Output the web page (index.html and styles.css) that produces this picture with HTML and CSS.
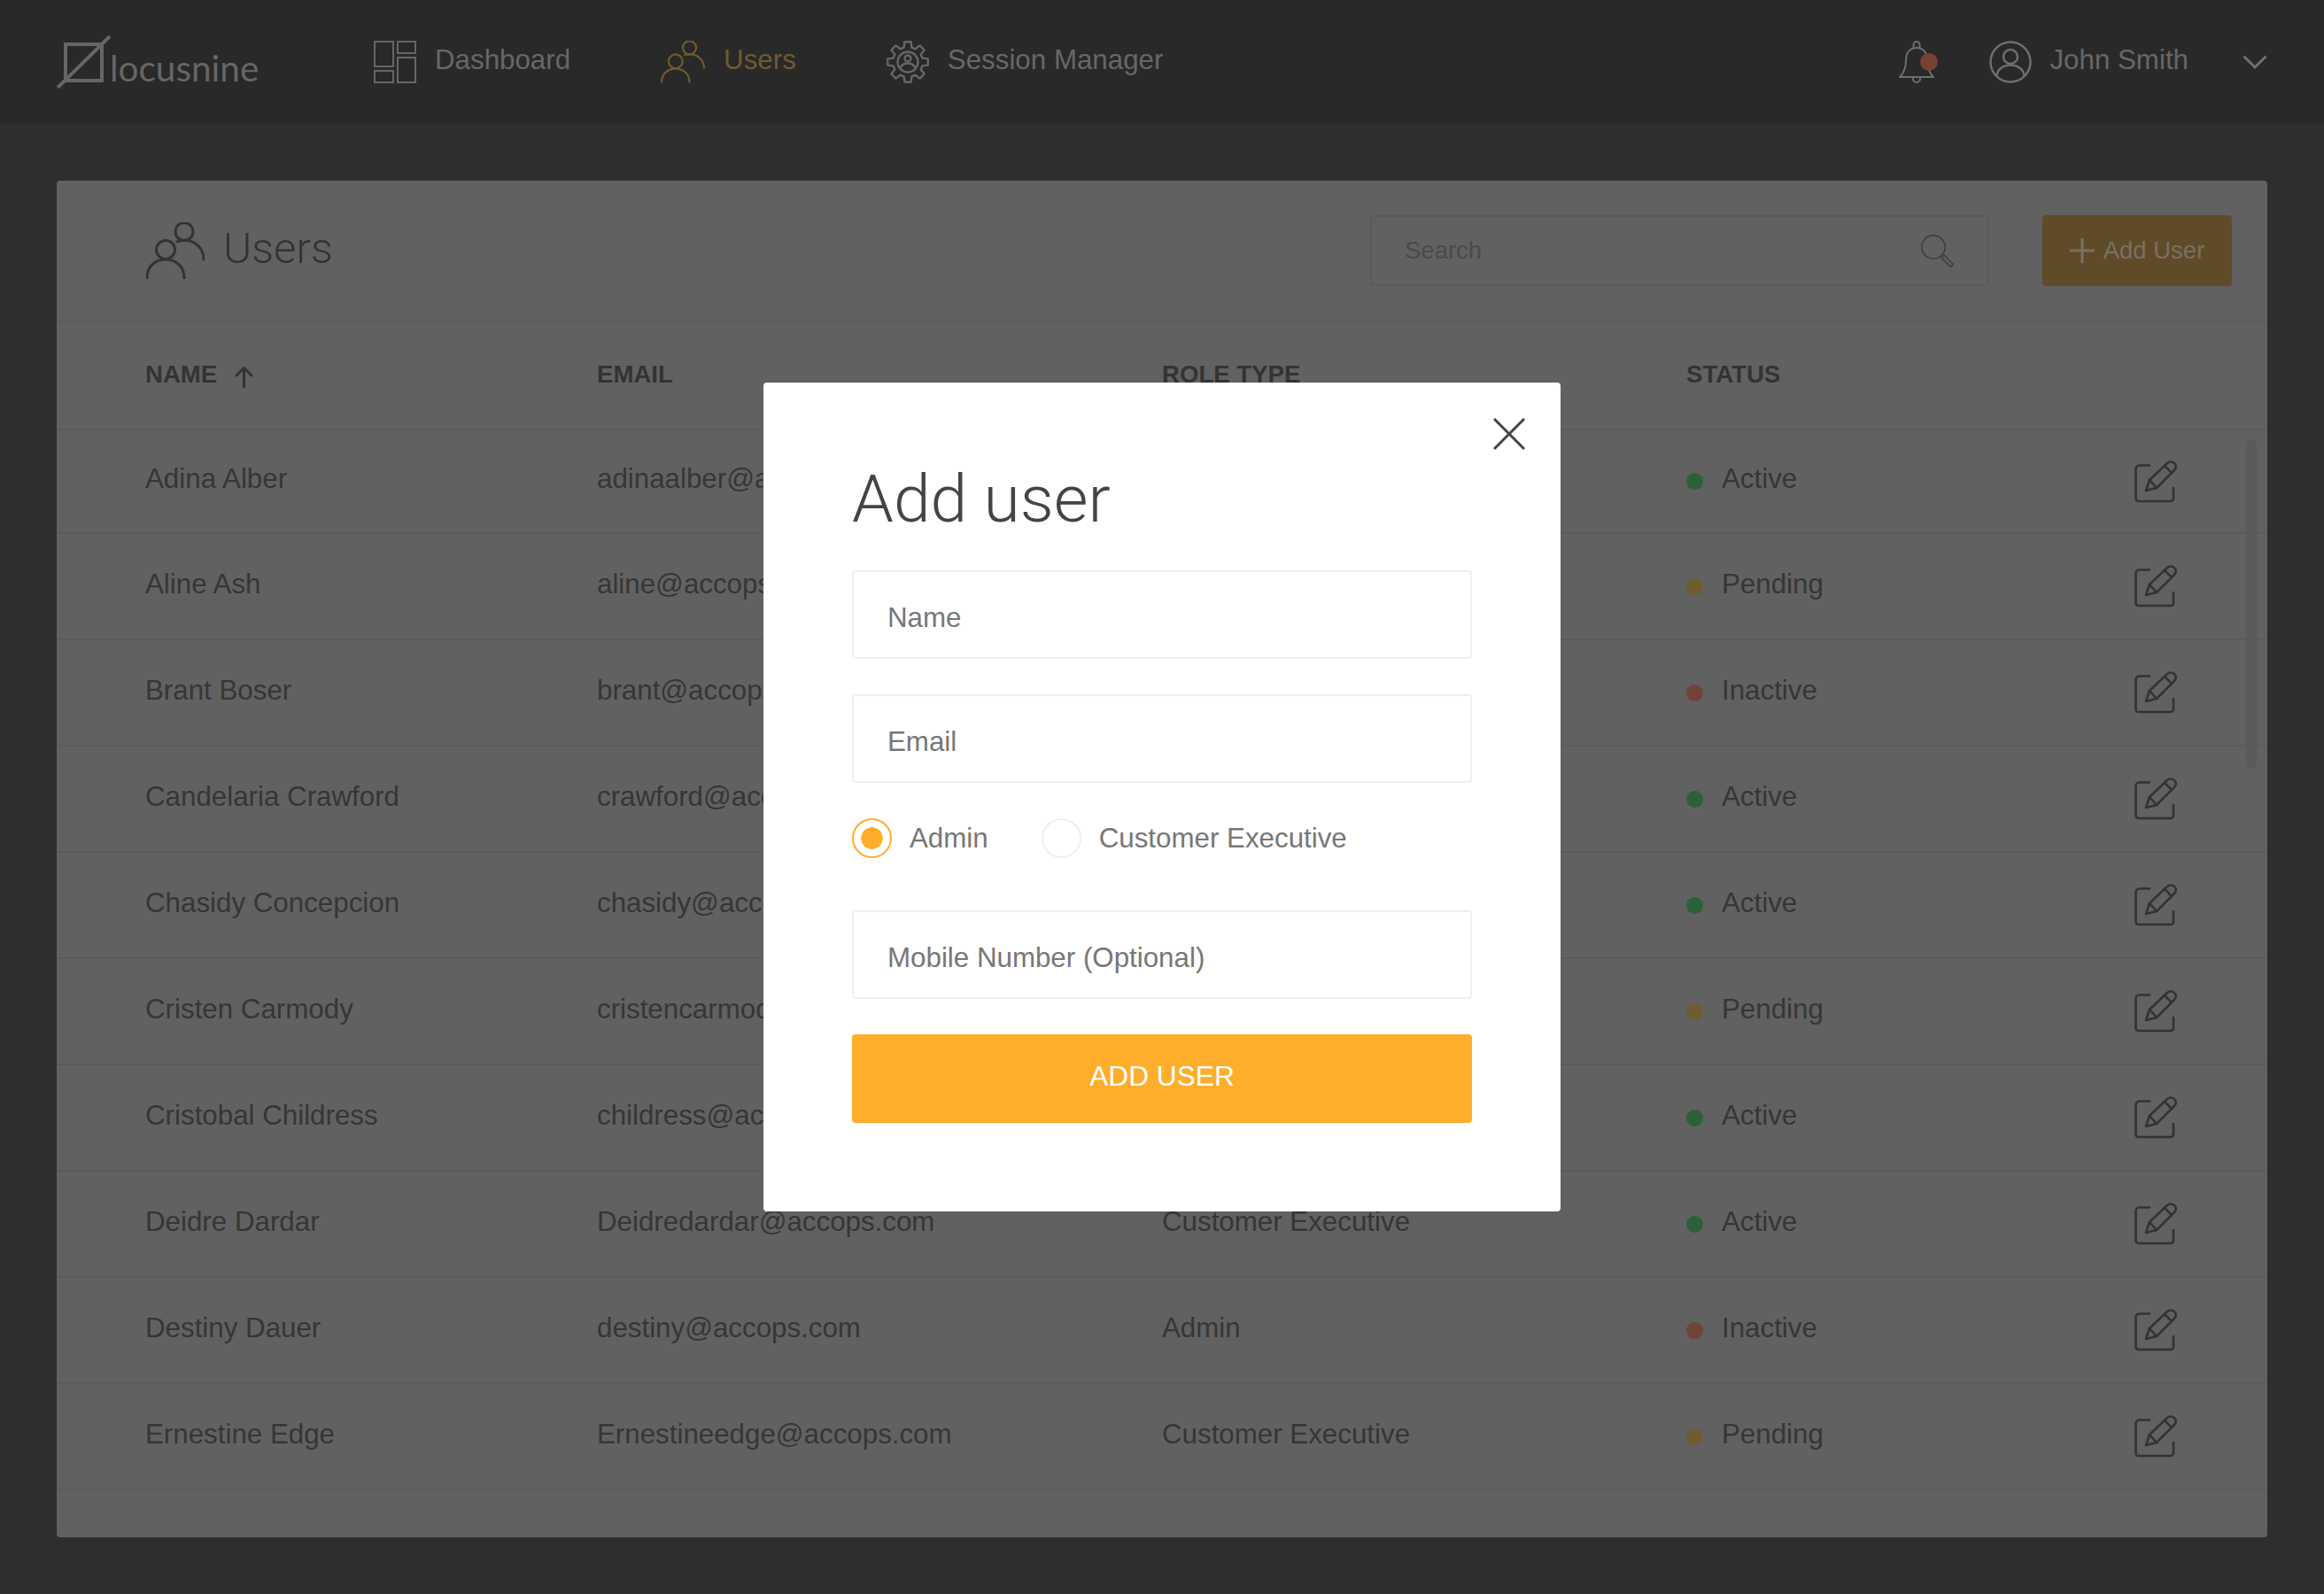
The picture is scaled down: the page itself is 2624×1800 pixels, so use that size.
FILE: index.html
```html
<!DOCTYPE html>
<html lang="en">
<head>
    <meta charset="UTF-8">
    <title>locusnine - Users</title>
    <link rel="stylesheet" href="styles.css">
</head>
<body>
    <svg class="defs" width="0" height="0">
        <symbol id="people" viewBox="0 0 66 64">
            <circle cx="22" cy="31" r="10.5"/>
            <path d="M1 63C1 50 10 42 22 42C34 42 43 50 43 63"/>
            <circle cx="43" cy="10.5" r="10"/>
            <path d="M35 22C38 20.8 41 20.5 44 20.5C56 20.5 65 30 65 42"/>
        </symbol>
        <symbol id="edit" viewBox="0 0 48 48">
            <path d="M17 5.5H5.500A4 4 0 0 0 1.500 9.500V43A3 3 0 0 0 4.500 46H41A3 3 0 0 0 44 43V31"/>
            <path d="M13 34L17 22L37 3Q41 0 45 3Q48.500 7 45 11L25 31Z"/>
            <path d="M17 22L25 31M34 6L42 14"/>
        </symbol>
    </svg>

    <nav class="topbar">
        <a class="logo">
            <svg width="62" height="60" viewBox="0 0 62 60">
                <rect x="10" y="10" width="41" height="41"/>
                <path d="M60 1L1 59"/>
            </svg>
            <span>locusnine</span>
        </a>
        <div class="nav-links">
            <a class="nav-item">
                <svg class="ico-dash" width="48" height="48" viewBox="0 0 48 48">
                    <rect x="1" y="1" width="21" height="28"/>
                    <rect x="27" y="1" width="20" height="13"/>
                    <rect x="27" y="19" width="20" height="28"/>
                    <rect x="1" y="34" width="21" height="13"/>
                </svg>
                <span>Dashboard</span>
            </a>
            <a class="nav-item active">
                <svg class="ico-people" width="50" height="48"><use href="#people"/></svg>
                <span>Users</span>
            </a>
            <a class="nav-item">
                <svg class="ico-gear" width="48" height="48" viewBox="0 0 48 48">
                    <path d="M19.600 7.580L20.400 1.280H27.600L28.400 7.580L32.500 9.280L37.520 5.390L42.610 10.480L38.720 15.500L40.420 19.600L46.720 20.400V27.600L40.420 28.400L38.720 32.500L42.610 37.520L37.520 42.610L32.500 38.720L28.400 40.420L27.600 46.720H20.400L19.600 40.420L15.500 38.720L10.480 42.610L5.390 37.520L9.280 32.500L7.580 28.400L1.280 27.600V20.400L7.580 19.600L9.280 15.500L5.390 10.480L10.480 5.390L15.500 9.280Z"/>
                    <circle cx="24" cy="24" r="11.500"/>
                    <circle cx="24" cy="20" r="3.500"/>
                    <path d="M15.500 31C17 27 20 25.500 24 25.500C28 25.500 31 27 32.500 31"/>
                </svg>
                <span>Session Manager</span>
            </a>
        </div>
        <div class="nav-right">
            <svg class="ico-bell" width="44" height="48" viewBox="0 0 44 48">
                <path d="M20 8C12 8 8 14 8 22C8 30 6 36 1 41H39C34 36 32 30 32 22C32 14 28 8 20 8Z"/>
                <path d="M16.500 8.500V4.500A3.500 3.500 0 0 1 23.500 4.500V8.500"/>
                <path d="M16 41V43A4 4 0 0 0 24 43V41"/>
                <circle class="bell-dot" cx="34" cy="24" r="10"/>
            </svg>
            <a class="user-menu">
                <svg class="ico-avatar" width="48" height="48" viewBox="0 0 48 48">
                    <circle cx="24" cy="24" r="22.500"/>
                    <circle cx="24" cy="18" r="8"/>
                    <path d="M8.500 40C9 32 16 27.500 24 27.500C32 27.500 39 32 39.500 40"/>
                </svg>
                <span>John Smith</span>
            </a>
            <svg class="ico-chevron" width="28" height="16" viewBox="0 0 28 16">
                <path d="M1.500 1.500L14 14L26.500 1.500"/>
            </svg>
        </div>
    </nav>

    <main class="content">
        <section class="card">
            <header class="card-head">
                <svg class="title-icon" width="66" height="64"><use href="#people"/></svg>
                <h2>Users</h2>
                <div class="search">
                    <span>Search</span>
                    <svg width="37" height="37" viewBox="0 0 37 37">
                        <circle cx="14" cy="14" r="13.200"/>
                        <path d="M23 26L26 23L36.500 33.500L33.500 36.500Z"/>
                    </svg>
                </div>
                <button class="add-btn">
                    <svg width="28" height="28" viewBox="0 0 28 28"><path d="M14 0V28M0 14H28"/></svg>
                    Add User
                </button>
            </header>

            <div class="row head-row">
                <div class="sort">NAME
                    <svg width="21" height="24" viewBox="0 0 21 24"><path d="M10.500 23V2M2 10L10.500 1.500L19 10"/></svg>
                </div>
                <div>EMAIL</div>
                <div>ROLE TYPE</div>
                <div>STATUS</div>
            </div>

            <div class="row">
                <div>Adina Alber</div><div>adinaalber@accops.com</div><div>Customer Executive</div>
                <div class="status"><i class="dot active"></i>Active</div>
                <svg class="edit" width="48" height="48"><use href="#edit"/></svg>
            </div>
            <div class="row">
                <div>Aline Ash</div><div>aline@accops.com</div><div>Admin</div>
                <div class="status"><i class="dot pending"></i>Pending</div>
                <svg class="edit" width="48" height="48"><use href="#edit"/></svg>
            </div>
            <div class="row">
                <div>Brant Boser</div><div>brant@accops.com</div><div>Customer Executive</div>
                <div class="status"><i class="dot inactive"></i>Inactive</div>
                <svg class="edit" width="48" height="48"><use href="#edit"/></svg>
            </div>
            <div class="row">
                <div>Candelaria Crawford</div><div>crawford@accops.com</div><div>Admin</div>
                <div class="status"><i class="dot active"></i>Active</div>
                <svg class="edit" width="48" height="48"><use href="#edit"/></svg>
            </div>
            <div class="row">
                <div>Chasidy Concepcion</div><div>chasidy@accops.com</div><div>Customer Executive</div>
                <div class="status"><i class="dot active"></i>Active</div>
                <svg class="edit" width="48" height="48"><use href="#edit"/></svg>
            </div>
            <div class="row">
                <div>Cristen Carmody</div><div>cristencarmody@accops.com</div><div>Customer Executive</div>
                <div class="status"><i class="dot pending"></i>Pending</div>
                <svg class="edit" width="48" height="48"><use href="#edit"/></svg>
            </div>
            <div class="row">
                <div>Cristobal Childress</div><div>childress@accops.com</div><div>Admin</div>
                <div class="status"><i class="dot active"></i>Active</div>
                <svg class="edit" width="48" height="48"><use href="#edit"/></svg>
            </div>
            <div class="row">
                <div>Deidre Dardar</div><div>Deidredardar@accops.com</div><div>Customer Executive</div>
                <div class="status"><i class="dot active"></i>Active</div>
                <svg class="edit" width="48" height="48"><use href="#edit"/></svg>
            </div>
            <div class="row">
                <div>Destiny Dauer</div><div>destiny@accops.com</div><div>Admin</div>
                <div class="status"><i class="dot inactive"></i>Inactive</div>
                <svg class="edit" width="48" height="48"><use href="#edit"/></svg>
            </div>
            <div class="row">
                <div>Ernestine Edge</div><div>Ernestineedge@accops.com</div><div>Customer Executive</div>
                <div class="status"><i class="dot pending"></i>Pending</div>
                <svg class="edit" width="48" height="48"><use href="#edit"/></svg>
            </div>

            <div class="scroll-thumb"></div>
        </section>
    </main>

    <div class="modal-wrap">
        <form class="modal">
            <svg class="modal-close" width="36" height="36" viewBox="0 0 36 36"><path d="M1 1L35 35M35 1L1 35"/></svg>
            <h1>Add user</h1>
            <input class="field" type="text" placeholder="Name">
            <input class="field" type="text" placeholder="Email">
            <div class="radios">
                <label><input type="radio" name="role" checked>Admin</label>
                <label><input type="radio" name="role">Customer Executive</label>
            </div>
            <input class="field" type="text" placeholder="Mobile Number (Optional)">
            <button class="submit-btn" type="button">ADD USER</button>
        </form>
    </div>
</body>
</html>
```
FILE: styles.css
```css
* {
    box-sizing: border-box;
}

body {
    margin: 0;
    width: 2624px;
    height: 1800px;
    overflow: hidden;
    background-color: #2e2e2e;
    font-family: 'Liberation Sans', Arial, sans-serif;
    font-size: 31.3px;
    color: #363636;
}

.defs {
    display: block;
    height: 0;
}

svg {
    fill: none;
    flex-shrink: 0;
}

/* top bar */
.topbar {
    display: flex;
    align-items: center;
    height: 140px;
    padding: 0 64px;
    background-color: #292929;
    color: #676767;
}

.logo {
    display: flex;
    align-items: flex-end;
    width: 227px;
    height: 60px;
}

.logo svg {
    stroke: #666;
    stroke-width: 4;
}

.logo span {
    margin: 0 0 3px -2px;
    font-family: 'Lato', sans-serif;
    font-size: 40.5px;
    line-height: 40px;
    color: #666;
}

.nav-links {
    display: flex;
    gap: 102px;
    margin-left: 131px;
}

.nav-item {
    display: flex;
    align-items: center;
    gap: 21px;
}

.nav-item span,
.user-menu span {
    padding-bottom: 4px;
}

.nav-item.active {
    color: #6f5a2f;
}

.ico-dash rect {
    stroke: #666;
    stroke-width: 2;
}

.ico-people {
    stroke: #6f5a2f;
    stroke-width: 3;
}

.ico-gear {
    stroke: #666;
    stroke-width: 2.4;
    stroke-linejoin: round;
}

.nav-right {
    display: flex;
    align-items: center;
    margin-left: auto;
}

.ico-bell path {
    stroke: #6e6e6e;
    stroke-width: 2;
    stroke-linejoin: round;
}

.bell-dot {
    fill: #774330;
}

.user-menu {
    display: flex;
    align-items: center;
    gap: 20px;
    margin-left: 58px;
}

.ico-avatar {
    stroke: #6e6e6e;
    stroke-width: 2.5;
}

.ico-chevron {
    margin-left: 61px;
    stroke: #707070;
    stroke-width: 3;
}

/* users card */
.content {
    padding: 64px;
}

.card {
    position: relative;
    height: 1532px;
    background-color: #616161;
    border-radius: 4px;
    overflow: hidden;
}

.card-head {
    display: flex;
    align-items: center;
    height: 160px;
    padding: 0 40px 0 101px;
    border-bottom: 2px solid #5b5b5b;
}

.title-icon {
    stroke: #333;
    stroke-width: 3;
    stroke-linecap: round;
}

.card-head h2 {
    margin: 0 0 6px 21px;
    font-family: 'Roboto', sans-serif;
    font-size: 49px;
    font-weight: 300;
    color: #333;
}

.search {
    display: flex;
    align-items: center;
    justify-content: space-between;
    width: 699px;
    height: 80px;
    margin-left: auto;
    padding: 0 38px 0 37px;
    border: 2px solid #5a5a5a;
    border-radius: 4px;
    font-size: 27.5px;
    color: #4a4a4a;
}

.search svg {
    stroke: #3d3d3d;
    stroke-width: 1.5;
}

.add-btn {
    display: flex;
    align-items: center;
    justify-content: center;
    gap: 10px;
    width: 214px;
    height: 80px;
    margin-left: 60px;
    padding: 0;
    border: none;
    border-radius: 4px;
    background-color: #5f4b28;
    font-family: inherit;
    font-size: 27.5px;
    color: #787162;
}

.add-btn svg {
    stroke: #787162;
    stroke-width: 3;
}

.row {
    display: grid;
    grid-template-columns: 510px 638px 592px 1fr 48px;
    align-items: center;
    height: 120px;
    padding: 0 102px 0 100px;
    border-bottom: 2px solid #5b5b5b;
}

.row > div {
    padding-bottom: 5px;
    white-space: nowrap;
}

.head-row {
    height: 122px;
    font-size: 27.6px;
    font-weight: bold;
    color: #333;
}

.row.head-row > div {
    padding-bottom: 3px;
}

.head-row + .row {
    height: 117px;
}

.sort {
    display: flex;
    align-items: center;
    gap: 20px;
}

.sort svg {
    stroke: #333;
    stroke-width: 3;
    stroke-linecap: round;
    margin-top: 6px;
}

.status {
    display: flex;
    align-items: center;
}

.dot {
    width: 19px;
    height: 19px;
    margin: 5px 21px 0 0;
    border-radius: 50%;
}

.dot.active {
    background-color: #2d6038;
}

.dot.pending {
    background-color: #6f5c33;
}

.dot.inactive {
    background-color: #704437;
}

.edit {
    stroke: #333;
    stroke-width: 2.6;
    stroke-linecap: round;
    stroke-linejoin: round;
    overflow: visible;
}

.scroll-thumb {
    position: absolute;
    top: 292px;
    right: 12px;
    width: 12px;
    height: 372px;
    border-radius: 6px;
    background-color: #5a5a5a;
}

/* add user dialog */
.modal-wrap {
    position: fixed;
    inset: 0;
    display: flex;
    align-items: center;
    justify-content: center;
}

.modal {
    position: relative;
    display: flex;
    flex-direction: column;
    width: 900px;
    height: 936px;
    padding: 91px 100px 100px;
    background-color: #fff;
    border-radius: 4px;
}

.modal-close {
    position: absolute;
    top: 40px;
    right: 40px;
    stroke: #444;
    stroke-width: 3;
}

.modal h1 {
    margin: 0 0 41px;
    font-family: 'Roboto', sans-serif;
    font-size: 75px;
    font-weight: 300;
    line-height: 80px;
    color: #444;
}

.field {
    height: 100px;
    margin-bottom: 40px;
    padding: 7px 38px 0;
    border: 2px solid #efefef;
    border-radius: 4px;
    background-color: #fff;
    font-family: inherit;
    font-size: 31.3px;
}

.field::placeholder {
    color: #777;
    opacity: 1;
}

.radios {
    display: flex;
    gap: 60px;
    height: 46px;
    margin: -1px 0 59px;
    color: #777;
}

.radios label {
    display: flex;
    align-items: center;
    gap: 20px;
    padding-top: 1px;
}

.radios input {
    appearance: none;
    width: 45px;
    height: 45px;
    margin: -1px 0 0;
    border: 2px solid #efefef;
    border-radius: 50%;
    background-color: #fff;
}

.radios input:checked {
    border-color: #ffae2b;
    background: radial-gradient(circle, #ffae2b 12px, #fff 12.5px);
}

.submit-btn {
    height: 100px;
    padding: 0 0 5px;
    border: none;
    border-radius: 4px;
    background-color: #ffae2b;
    font-family: inherit;
    font-size: 31.7px;
    color: #fff;
}
```
